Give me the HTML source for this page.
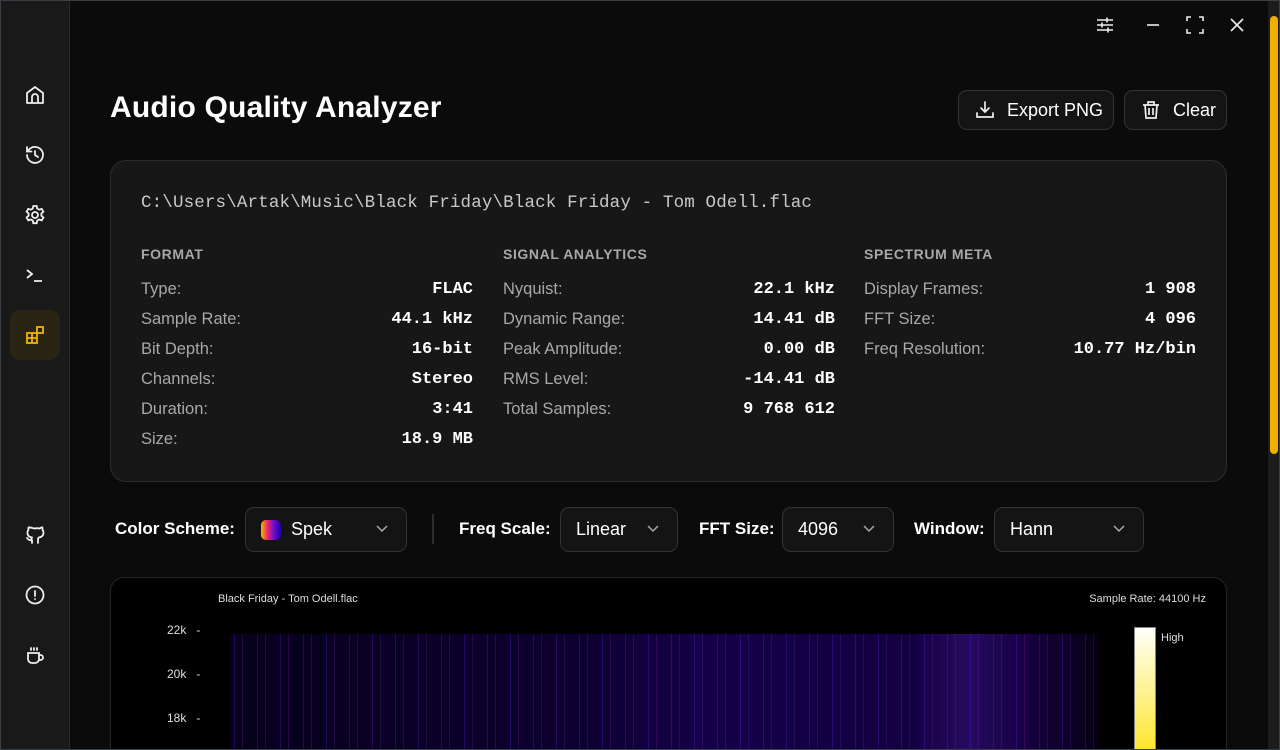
<!DOCTYPE html>
<html style="overflow:hidden;height:750px"><head><meta charset="utf-8"><style>
*{box-sizing:border-box;margin:0;padding:0}
body{width:1280px;height:750px;background:#0b0b0b;font-family:"Liberation Sans",sans-serif;color:#fff;overflow:hidden;position:relative}
.frame{position:absolute;inset:0;border:1px solid #3a3f47;pointer-events:none;z-index:10}
.side{position:absolute;left:0;top:0;width:70px;height:750px;background:#191919;border-right:1px solid #2a2a2a}
.ic{position:absolute;left:23px;width:24px;height:24px}
.act{position:absolute;left:10px;top:310px;width:50px;height:50px;border-radius:10px;background:#2a2414}
h1{position:absolute;left:110px;top:91px;font-size:30px;font-weight:bold;letter-spacing:.2px}
.btn{position:absolute;top:90px;height:40px;border:1px solid #333;border-radius:9px;background:#141414;font-size:18px;display:flex;align-items:center;padding-left:16px}
.card{position:absolute;left:110px;top:160px;width:1117px;height:322px;background:#171717;border:1px solid #2c2c2c;border-radius:16px}
.path{position:absolute;left:141px;top:193px;font-family:"Liberation Mono",monospace;font-size:17.5px;color:#c8c8c8;letter-spacing:.15px}
.col{position:absolute;top:246px;width:332px}
.hd{font-size:14px;font-weight:bold;color:#a8a8a8;letter-spacing:.6px;height:34px}
.row{display:flex;justify-content:space-between;height:30px;font-size:16.5px;color:#a8a8a8}
.row b{font-family:"Liberation Mono",monospace;color:#fff;font-size:17px}
.lbl{position:absolute;top:519px;font-size:17px;font-weight:bold}
.sel{position:absolute;top:507px;height:45px;border:1px solid #333;border-radius:9px;background:#141414;font-size:18px;display:flex;align-items:center;padding-left:15px}
.sel svg{position:absolute;right:18px;top:17px}
.spec{position:absolute;left:110px;top:577px;width:1117px;height:173px;background:#000;border:1px solid #262626;border-bottom:none;border-radius:14px 14px 0 0;overflow:hidden}
.st{position:absolute;font-size:11px;color:#ddd}
.yl{position:absolute;left:167px;font-size:12px;color:#ddd}
.sb{position:absolute;right:0;top:0;width:12px;height:750px;background:#1c1c1c}
</style></head><body>
<div class="side">
<svg class="ic" style="top:83px" viewBox="0 0 24 24" fill="none" stroke="#eee" stroke-width="1.8" stroke-linejoin="round"><path d="M4 10l8-6 8 6v10H4z"/><path d="M9 20v-6a3 3 0 0 1 6 0v6"/></svg>
<svg class="ic" style="top:143px" viewBox="0 0 24 24" fill="none" stroke="#eee" stroke-width="1.8" stroke-linecap="round"><path d="M4 12a8 8 0 1 0 2.3-5.7L4 8.5"/><path d="M4 4v4.5h4.5"/><path d="M12 8v4l3 2"/></svg>
<svg class="ic" style="top:203px" viewBox="0 0 24 24" fill="none" stroke="#eee" stroke-width="1.8"><circle cx="12" cy="12" r="3"/><path d="M10.3 3h3.4l.5 2.6 2 1.1 2.5-.9 1.7 2.9-2 1.8v2.2l2 1.8-1.7 2.9-2.5-.9-2 1.1-.5 2.6h-3.4l-.5-2.6-2-1.1-2.5.9-1.7-2.9 2-1.8v-2.2l-2-1.8 1.7-2.9 2.5.9 2-1.1z"/></svg>
<svg class="ic" style="top:263px" viewBox="0 0 24 24" fill="none" stroke="#eee" stroke-width="1.8"><path d="M4 7l5 4-5 4M11 18h8"/></svg>
<div class="act"></div>
<svg class="ic" style="top:323px" viewBox="0 0 24 24" fill="none" stroke="#f0b400" stroke-width="1.8"><rect x="4" y="10" width="10" height="10"/><path d="M9 10v10M4 15h10"/><rect x="14" y="4" width="6" height="6"/></svg>
<svg class="ic" style="top:523px" viewBox="0 0 24 24" fill="none" stroke="#eee" stroke-width="1.8" stroke-linejoin="round" stroke-linecap="round"><path d="M9 20v-3c-3 1-4-1-5-2M15 20v-3.5c0-1 .3-1.6.8-2 2.7-.3 4.7-1.5 4.7-5 0-1-.4-2-1-2.6.1-.8.1-1.7-.2-2.6 0 0-1 0-2.8 1.2a10 10 0 0 0-5 0C6.6 4.3 5.6 4.3 5.6 4.3c-.3.9-.3 1.8-.2 2.6-.6.6-1 1.6-1 2.6 0 3.5 2 4.7 4.7 5-.5.4-.8 1-.8 2"/></svg>
<svg class="ic" style="top:583px" viewBox="0 0 24 24" fill="none" stroke="#eee" stroke-width="1.8" stroke-linecap="round"><circle cx="12" cy="12" r="8.5"/><path d="M12 8v5M12 16v.1"/></svg>
<svg class="ic" style="top:643px" viewBox="0 0 24 24" fill="none" stroke="#eee" stroke-width="1.8" stroke-linecap="round"><path d="M5 10h11v6a4 4 0 0 1-4 4H9a4 4 0 0 1-4-4z"/><path d="M16 12h1.5a2.5 2.5 0 0 1 0 5H16"/><path d="M8 5v2M11 5v2M14 5v2"/></svg>
</div>
<svg style="position:absolute;left:1096px;top:16px" width="18" height="18" viewBox="0 0 18 18" stroke="#eee" stroke-width="1.6"><path d="M1 4h16M1 9h16M1 14h16M11 1.5v5M6 6.5v5M12 11.5v5"/></svg>
<svg style="position:absolute;left:1144px;top:16px" width="18" height="18" stroke="#eee" stroke-width="1.6"><path d="M3 9h12"/></svg>
<svg style="position:absolute;left:1186px;top:16px" width="18" height="18" fill="none" stroke="#eee" stroke-width="1.6"><path d="M1 5V1h4M13 1h4v4M17 13v4h-4M5 17H1v-4"/></svg>
<svg style="position:absolute;left:1228px;top:16px" width="18" height="18" stroke="#eee" stroke-width="1.6"><path d="M3 3l12 12M15 3L3 15"/></svg>
<h1>Audio Quality Analyzer</h1>
<div class="btn" style="left:958px;width:156px"><svg width="20" height="20" viewBox="0 0 20 20" fill="none" stroke="#eee" stroke-width="1.7" stroke-linecap="round"><path d="M10 2v10M6 8l4 4 4-4M2 13v4h16v-4"/></svg><span style="margin-left:12px">Export PNG</span></div>
<div class="btn" style="left:1124px;width:103px"><svg width="20" height="20" viewBox="0 0 20 20" fill="none" stroke="#eee" stroke-width="1.7"><path d="M2 5h16M7 5V2h6v3M4 5l1 13h10l1-13M8 8v7M12 8v7"/></svg><span style="margin-left:12px">Clear</span></div>
<div class="card"></div>
<div class="path">C:\Users\Artak\Music\Black Friday\Black Friday - Tom Odell.flac</div>
<div class="col" style="left:141px"><div class="hd">FORMAT</div>
<div class="row">Type:<b>FLAC</b></div><div class="row">Sample Rate:<b>44.1 kHz</b></div><div class="row">Bit Depth:<b>16-bit</b></div><div class="row">Channels:<b>Stereo</b></div><div class="row">Duration:<b>3:41</b></div><div class="row">Size:<b>18.9 MB</b></div></div>
<div class="col" style="left:503px"><div class="hd">SIGNAL ANALYTICS</div>
<div class="row">Nyquist:<b>22.1 kHz</b></div><div class="row">Dynamic Range:<b>14.41 dB</b></div><div class="row">Peak Amplitude:<b>0.00 dB</b></div><div class="row">RMS Level:<b>-14.41 dB</b></div><div class="row">Total Samples:<b>9 768 612</b></div></div>
<div class="col" style="left:864px"><div class="hd">SPECTRUM META</div>
<div class="row">Display Frames:<b>1 908</b></div><div class="row">FFT Size:<b>4 096</b></div><div class="row">Freq Resolution:<b>10.77 Hz/bin</b></div></div>
<div class="lbl" style="left:115px">Color Scheme:</div>
<div class="sel" style="left:245px;width:162px"><span style="width:20px;height:20px;border-radius:5px;background:linear-gradient(90deg,#f0c000,#f02070,#6010d0,#2000a0);margin-right:10px"></span>Spek<svg width="12" height="8" fill="none" stroke="#aaa" stroke-width="1.5"><path d="M1 1l5 5 5-5"/></svg></div>
<div style="position:absolute;left:432px;top:514px;width:2px;height:30px;background:#2e2e2e"></div>
<div class="lbl" style="left:459px">Freq Scale:</div>
<div class="sel" style="left:560px;width:118px">Linear<svg width="12" height="8" fill="none" stroke="#aaa" stroke-width="1.5"><path d="M1 1l5 5 5-5"/></svg></div>
<div class="lbl" style="left:699px">FFT Size:</div>
<div class="sel" style="left:782px;width:112px">4096<svg width="12" height="8" fill="none" stroke="#aaa" stroke-width="1.5"><path d="M1 1l5 5 5-5"/></svg></div>
<div class="lbl" style="left:914px">Window:</div>
<div class="sel" style="left:994px;width:150px">Hann<svg width="12" height="8" fill="none" stroke="#aaa" stroke-width="1.5"><path d="M1 1l5 5 5-5"/></svg></div>
<div class="spec">
<div class="st" style="left:107px;top:15px">Black Friday - Tom Odell.flac</div>
<div class="st" style="right:20px;top:15px">Sample Rate: 44100 Hz</div>
<div style="position:absolute;left:118px;top:56px;width:870px;height:140px;background:repeating-linear-gradient(90deg,rgba(0,0,0,0) 0 5px,rgba(100,30,220,.3) 5px 6px,rgba(0,0,0,0) 6px 13px,rgba(150,40,200,.2) 13px 14px,rgba(0,0,0,0) 14px 23px),linear-gradient(90deg,#07001c 0,#0c0030 40%,#140048 55%,#120040 78%,#260a60 85%,#150040 92%,#050012 100%)"></div>
<div style="position:absolute;left:1023px;top:49px;width:22px;height:150px;border:1px solid #888;background:linear-gradient(#fffff8,#fff080 50%,#ffe000)"></div>
<div class="st" style="left:1050px;top:54px">High</div>
</div>
<div class="yl" style="top:623px">22k&nbsp;&nbsp; -</div>
<div class="yl" style="top:667px">20k&nbsp;&nbsp; -</div>
<div class="yl" style="top:711px">18k&nbsp;&nbsp; -</div>
<div class="sb"><div style="position:absolute;left:2px;top:16px;width:8px;height:438px;border-radius:4px;background:#f0b000"></div></div>
<div class="frame"></div>
</body></html>
